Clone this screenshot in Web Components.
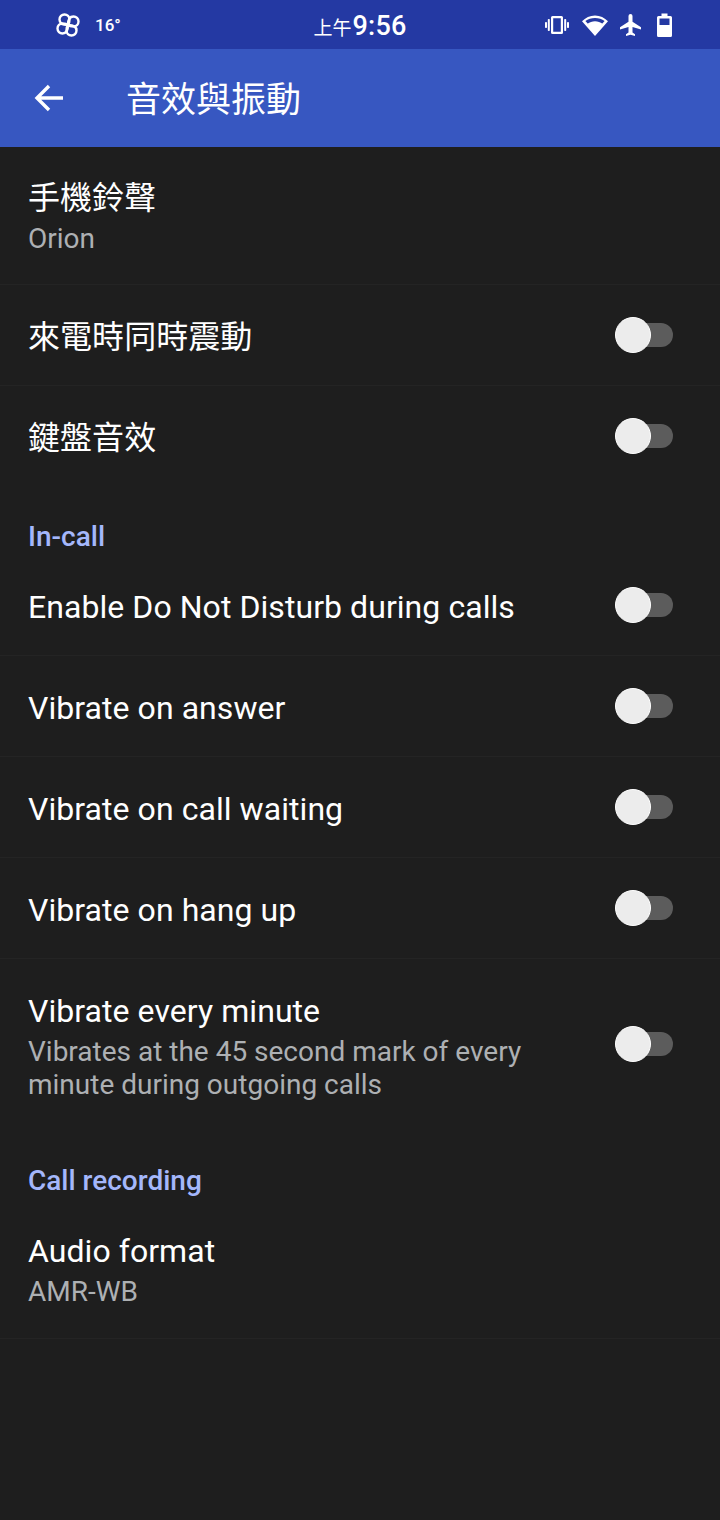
<!DOCTYPE html>
<html lang="zh-Hant">
<head>
<meta charset="utf-8">
<title>音效與振動</title>
<style>
  html, body { margin: 0; padding: 0; background: #1e1e1e; }
  body { width: 720px; height: 1520px; overflow: hidden; font-family: Roboto, "Noto Sans CJK TC", sans-serif; }
</style>
</head>
<body>
<status-bar></status-bar>
<app-bar>音效與振動</app-bar>
<main>
  <pref-row title-text="手機鈴聲" summary="Orion" height="137" style="--nudge: -2px"></pref-row>
  <pref-row title-text="來電時同時震動" toggle height="101" style="--nudge: 4px"></pref-row>
  <pref-row title-text="鍵盤音效" toggle height="100" last style="--nudge: 4px"></pref-row>
  <pref-header height="69">In-call</pref-header>
  <pref-row title-text="Enable Do Not Disturb during calls" toggle height="101" style="--nudge: 4px"></pref-row>
  <pref-row title-text="Vibrate on answer" toggle height="101" style="--nudge: 4px"></pref-row>
  <pref-row title-text="Vibrate on call waiting" toggle height="101" style="--nudge: 4px"></pref-row>
  <pref-row title-text="Vibrate on hang up" toggle height="101" style="--nudge: 4px"></pref-row>
  <pref-row title-text="Vibrate every minute" summary="Vibrates at the 45 second mark of every minute during outgoing calls" toggle height="170" last style="--nudge: 2px"></pref-row>
  <pref-header height="70">Call recording</pref-header>
  <pref-row title-text="Audio format" summary="AMR-WB" height="140"></pref-row>
</main>

<script>
class StatusBar extends HTMLElement {
  constructor () {
    super()
    this.shadow = this.attachShadow({ mode: 'open' })
  }

  connectedCallback () {
    this.shadow.innerHTML =
    /* html */`
    <style>
      :host{
        align-items: center;
        background: #2439a3;
        color: #fff;
        display: grid;
        grid-template-columns: 1fr auto 1fr;
        height: 49px;
      }

      .left, .right{
        align-items: center;
        display: flex;
      }

      .left{
        font-size: 17px;
        font-weight: 500;
        gap: 15px;
        padding-left: 56px;
      }

      .right{
        justify-content: flex-end;
        padding-right: 48px;
      }

      .clock{
        align-items: baseline;
        display: flex;
        font-size: 27px;
        font-weight: 500;
        letter-spacing: .2px;
        padding-top: 2px;
      }

      .clock small{
        font-size: 19px;
        font-weight: 400;
        letter-spacing: 0;
        margin-right: 1px;
      }

      svg{
        display: block;
      }
    </style>
    <div class="left">
      <svg width="24" height="24" viewBox="0 0 24 24" fill="none" stroke="#fff" stroke-width="2.400" stroke-linejoin="round">
        <path d="M12 12C7.500 12 3.500 11 3.500 6.500A5 5 0 0 1 13.500 6.500C13.500 9 13 11 12 12Z"/>
        <path d="M12 12C7.500 12 3.500 11 3.500 6.500A5 5 0 0 1 13.500 6.500C13.500 9 13 11 12 12Z" transform="rotate(90 12 12)"/>
        <path d="M12 12C7.500 12 3.500 11 3.500 6.500A5 5 0 0 1 13.500 6.500C13.500 9 13 11 12 12Z" transform="rotate(180 12 12)"/>
        <path d="M12 12C7.500 12 3.500 11 3.500 6.500A5 5 0 0 1 13.500 6.500C13.500 9 13 11 12 12Z" transform="rotate(270 12 12)"/>
      </svg>
      <span>16°</span>
    </div>
    <div class="clock"><small>上午</small>9:56</div>
    <div class="right">
      <svg width="24" height="24" viewBox="0 0 24 24" fill="#fff" style="margin-right: 13px">
        <path fill-rule="evenodd" d="M7.500 3h9A1.500 1.500 0 0 1 18 4.500v15a1.500 1.500 0 0 1-1.500 1.500h-9A1.500 1.500 0 0 1 6 19.500v-15A1.500 1.500 0 0 1 7.500 3zM8.200 5.200v13.600h7.600V5.200z"/>
        <rect x="2.800" y="6" width="2" height="12" rx=".8"/>
        <rect x="19.200" y="6" width="2" height="12" rx=".8"/>
        <rect x="0" y="9" width="2" height="6" rx=".8"/>
        <rect x="22" y="9" width="2" height="6" rx=".8"/>
      </svg>
      <svg width="26" height="24" viewBox="0 0 26 24" fill="#fff" style="margin-right: 12px">
        <path fill-rule="evenodd" d="M13 23 0 8.200C3.400 4.900 8 2.500 13 2.500s9.600 2.400 13 5.700zM13 18.800 22.600 8C20 6.100 16.700 5 13 5S6 6.100 3.400 8z"/>
        <path d="M13 22 5.500 10.800C7.600 9.200 10.200 8.200 13 8.200s5.400 1 7.500 2.600z"/>
      </svg>
      <svg width="21" height="24" viewBox="0 0 21 24" fill="#fff" style="margin-right: 16px">
        <path d="M21 16.500v-2.300l-8.500-5.400V3a2 2 0 0 0-4 0v5.800L0 14.200v2.300l8.500-2.600V19.500L6 21.200V23l4.500-1.200L15 23v-1.800l-2.500-1.700v-5.600z"/>
      </svg>
      <svg width="15" height="24" viewBox="0 0 15 24" fill="#fff">
        <path fill-rule="evenodd" d="M4.500 .5h6v2.500h3A1.500 1.500 0 0 1 15 4.500v18A1.500 1.500 0 0 1 13.500 24H1.500A1.500 1.500 0 0 1 0 22.500v-18A1.500 1.500 0 0 1 1.500 3h3zM2.500 5.500v6.500h10V5.500z"/>
      </svg>
    </div>
    `
  }
}

class AppBar extends HTMLElement {
  constructor () {
    super()
    this.shadow = this.attachShadow({ mode: 'open' })
  }

  connectedCallback () {
    this.shadow.innerHTML =
    /* html */`
    <style>
      :host{
        align-items: center;
        background: #3757c1;
        color: #fff;
        display: flex;
        font-size: 35px;
        height: 98px;
        margin-bottom: 1px;
        padding-left: 33px;
      }

      svg{
        display: block;
        margin-right: 61px;
      }

      span{
        padding-bottom: 4px;
      }
    </style>
    <svg width="32" height="32" viewBox="0 0 32 32" fill="none" stroke="#fff" stroke-width="3.400">
      <path d="M30 16H4M16 4 4 16l12 12"/>
    </svg>
    <span><slot></slot></span>
    `
  }
}

class SwitchToggle extends HTMLElement {
  constructor () {
    super()
    this.shadow = this.attachShadow({ mode: 'open' })
  }

  connectedCallback () {
    this.shadow.innerHTML =
    /* html */`
    <style>
      :host{
        align-items: center;
        display: flex;
        height: 36px;
        position: relative;
        width: 58px;
      }

      .track{
        background: #5c5c5c;
        border-radius: 12px;
        height: 24px;
        margin-left: 2px;
        width: 56px;
      }

      .thumb{
        background: #ececec;
        border: 1px solid #fff;
        border-radius: 50%;
        box-sizing: border-box;
        height: 36px;
        left: 0;
        position: absolute;
        top: 0;
        width: 36px;
      }
    </style>
    <div class="track"></div>
    <div class="thumb"></div>
    `
  }
}

class PrefRow extends HTMLElement {
  constructor () {
    super()
    this.shadow = this.attachShadow({ mode: 'open' })
  }

  connectedCallback () {
    const summary = this.getAttribute('summary')
    const toggle = this.hasAttribute('toggle')
    const last = this.hasAttribute('last')
    this.shadow.innerHTML =
    /* html */`
    <style>
      :host{
        align-items: center;
        border-bottom: 1px solid ${last ? 'transparent' : '#242424'};
        box-sizing: border-box;
        display: flex;
        height: ${this.getAttribute('height')}px;
        padding: 0 47px 0 28px;
      }

      .text{
        flex: 1;
        margin-top: var(--nudge, 0);
        min-width: 0;
      }

      .title{
        color: #fff;
        font-size: 32px;
        letter-spacing: .06px;
        line-height: 44px;
      }

      .summary{
        color: #adb0b3;
        font-size: 28px;
        line-height: 33px;
        margin-top: 2px;
        max-width: 520px;
      }
    </style>
    <div class="text">
      <div class="title">${this.getAttribute('title-text')}</div>
      ${summary ? `<div class="summary">${summary}</div>` : ''}
    </div>
    ${toggle ? '<switch-toggle></switch-toggle>' : ''}
    `
  }
}

class PrefHeader extends HTMLElement {
  constructor () {
    super()
    this.shadow = this.attachShadow({ mode: 'open' })
  }

  connectedCallback () {
    this.shadow.innerHTML =
    /* html */`
    <style>
      :host{
        align-items: flex-end;
        box-sizing: border-box;
        color: #a4b7fb;
        display: flex;
        font-size: 28px;
        font-weight: 500;
        height: ${this.getAttribute('height')}px;
        line-height: 33px;
        padding: 0 28px 2px;
      }
    </style>
    <slot></slot>
    `
  }
}

customElements.define('status-bar', StatusBar)
customElements.define('app-bar', AppBar)
customElements.define('switch-toggle', SwitchToggle)
customElements.define('pref-row', PrefRow)
customElements.define('pref-header', PrefHeader)
</script>
</body>
</html>
